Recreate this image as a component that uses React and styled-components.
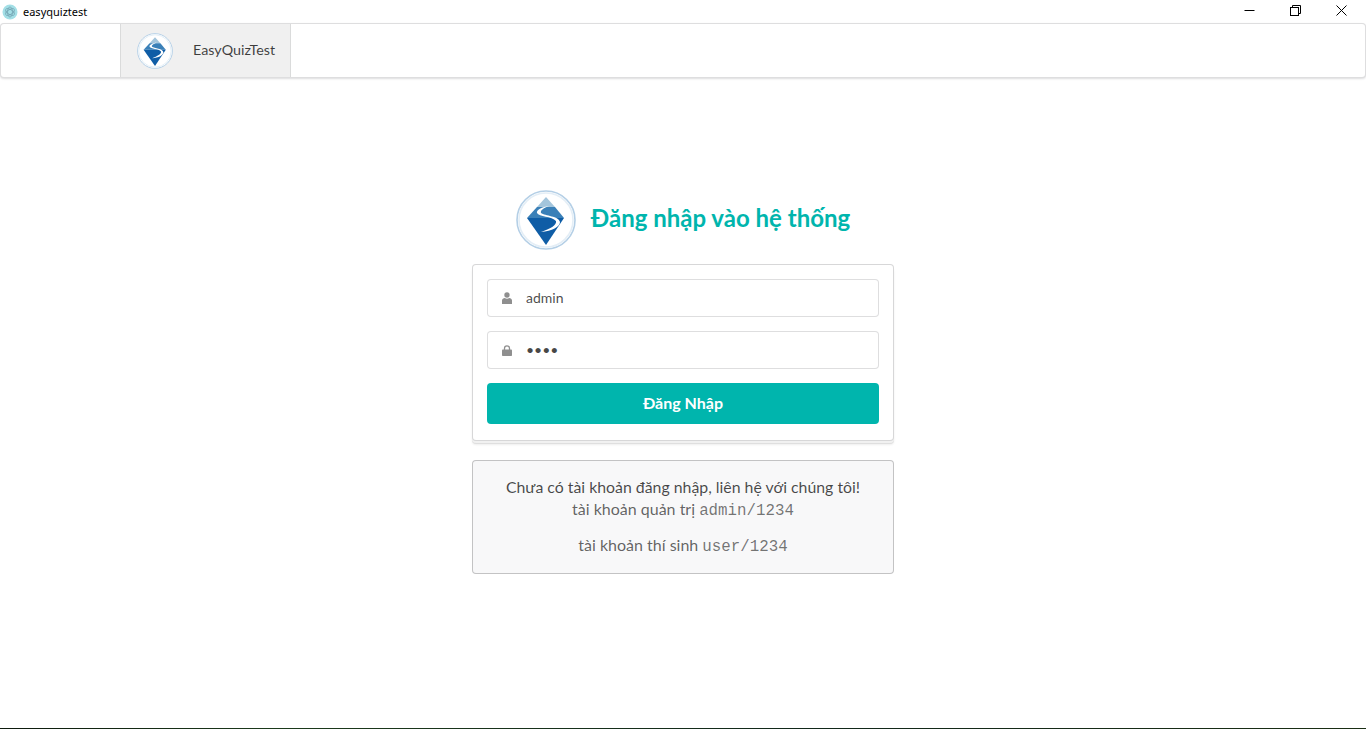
import styled, { createGlobalStyle } from "styled-components";

const GlobalStyle = createGlobalStyle`
  html, body {
    margin: 0;
    padding: 0;
    height: 100%;
    background: #ffffff;
    font-family: "Lato", "Liberation Sans", sans-serif;
    font-size: 14px;
    color: rgba(0, 0, 0, 0.87);
  }
  * {
    box-sizing: border-box;
  }
`;

function DiamondLogo({ size }) {
  return (
    <svg width={size} height={size} viewBox="0 0 60 60">
      <circle cx="30" cy="30" r="29" fill="#ffffff" stroke="#b4cfe6" strokeWidth="1.6" />
      <circle cx="30" cy="30" r="27" fill="none" stroke="#e4eef6" strokeWidth="1.6" />
      <path d="M30 7 L39 17 L21 17 Z" fill="#a3c5dc" />
      <path d="M21 17 L39 17 L48 28 L11 28 Z" fill="#3a80b8" />
      <path d="M11 28 L48 28 L30 55 Z" fill="#0f5da6" />
      <path
        d="M33 16 C26 17 20 20 21 23 C23 27 36 26 40 31 C41 35 34 39 25 42 C36 41 44 37 44 32 C43 26 29 26 25 23 C24 20 28 18 33 16 Z"
        fill="#ffffff"
      />
    </svg>
  );
}

function AppIcon() {
  return (
    <svg width="16" height="16" viewBox="0 0 16 16">
      <circle cx="8" cy="8" r="7.5" fill="#a3dfe6" />
      <g fill="none" stroke="#6f9fae" strokeWidth="0.7">
        <ellipse cx="8" cy="8" rx="5" ry="2.4" transform="rotate(30 8 8)" />
        <ellipse cx="8" cy="8" rx="5" ry="2.4" transform="rotate(90 8 8)" />
        <ellipse cx="8" cy="8" rx="5" ry="2.4" transform="rotate(150 8 8)" />
      </g>
    </svg>
  );
}

function UserIcon() {
  return (
    <svg width="10" height="12" viewBox="0 0 10 12" fill="#8f8f8f">
      <circle cx="5" cy="3" r="2.7" />
      <path d="M0 12 V8.6 C0 7 1.4 6.2 2.8 6 C4 7 6 7 7.2 6 C8.6 6.2 10 7 10 8.6 V12 Z" />
    </svg>
  );
}

function LockIcon() {
  return (
    <svg width="10" height="11" viewBox="0 0 10 11" fill="none">
      <path d="M2.5 5 V3.2 C2.5 1.7 3.6 0.8 5 0.8 C6.4 0.8 7.5 1.7 7.5 3.2 V5" stroke="#8f8f8f" strokeWidth="1.3" />
      <rect x="0" y="4.6" width="10" height="6.4" rx="0.8" fill="#8f8f8f" />
    </svg>
  );
}

function WindowButtons() {
  return (
    <WindowControls>
      <WindowButton>
        <svg width="11" height="11" viewBox="0 0 11 11">
          <path d="M0.5 5.5 H10.5" stroke="#000" strokeWidth="1" />
        </svg>
      </WindowButton>
      <WindowButton>
        <svg width="11" height="11" viewBox="0 0 11 11" fill="none" stroke="#000" strokeWidth="1">
          <rect x="0.5" y="2.5" width="8" height="8" />
          <path d="M2.5 2.5 V0.5 H10.5 V8.5 H8.5" />
        </svg>
      </WindowButton>
      <WindowButton>
        <svg width="11" height="11" viewBox="0 0 11 11">
          <path d="M0.5 0.5 L10.5 10.5 M10.5 0.5 L0.5 10.5" stroke="#000" strokeWidth="1" />
        </svg>
      </WindowButton>
    </WindowControls>
  );
}

export default function App() {
  return (
    <>
      <GlobalStyle />
      <Page>
        <TitleBar>
          <TitleLeft>
            <AppIcon />
            <WindowTitle>easyquiztest</WindowTitle>
          </TitleLeft>
          <WindowButtons />
        </TitleBar>

        <TopMenu>
          <MenuSpacer />
          <MenuBrand>
            <DiamondLogo size={36} />
            <span>EasyQuizTest</span>
          </MenuBrand>
        </TopMenu>

        <Content>
          <LoginColumn>
            <Header>
              <DiamondLogo size={60} />
              <Titulo>Đăng nhập vào hệ thống</Titulo>
            </Header>

            <StackedSegment>
              <Field>
                <FieldIcon>
                  <UserIcon />
                </FieldIcon>
                <Input type="text" defaultValue="admin" />
              </Field>
              <Field>
                <FieldIcon>
                  <LockIcon />
                </FieldIcon>
                <Input type="password" defaultValue="1234" />
              </Field>
              <Button type="button">Đăng Nhập</Button>
            </StackedSegment>

            <Message>
              <MessageHeader>Chưa có tài khoản đăng nhập, liên hệ với chúng tôi!</MessageHeader>
              <MessageLine>
                tài khoản quản trị <Code>admin/1234</Code>
              </MessageLine>
              <MessageLine $spaced>
                tài khoản thí sinh <Code>user/1234</Code>
              </MessageLine>
            </Message>
          </LoginColumn>
        </Content>
        <BottomEdge />
      </Page>
    </>
  );
}

const Page = styled.div`
  display: flex;
  flex-direction: column;
  height: 729px;
  overflow: hidden;
`;

const TitleBar = styled.div`
  display: flex;
  justify-content: space-between;
  align-items: center;
  height: 23px;
  flex-shrink: 0;
  background: #ffffff;
`;

const TitleLeft = styled.div`
  display: flex;
  align-items: center;
  gap: 5px;
  padding-left: 2px;
`;

const WindowTitle = styled.span`
  font-family: "Noto Sans", "Open Sans", sans-serif;
  font-size: 11px;
  color: #000000;
`;

const WindowControls = styled.div`
  display: flex;
  align-self: flex-start;
  padding-right: 2px;
`;

const WindowButton = styled.div`
  display: flex;
  justify-content: center;
  align-items: center;
  width: 46px;
  height: 20px;
`;

const TopMenu = styled.div`
  display: flex;
  flex-shrink: 0;
  height: 55px;
  background: #ffffff;
  border: 1px solid rgba(34, 36, 38, 0.15);
  border-radius: 4px;
  box-shadow: 0 1px 2px 0 rgba(34, 36, 38, 0.15);
`;

const MenuSpacer = styled.div`
  width: 119px;
`;

const MenuBrand = styled.div`
  display: flex;
  align-items: center;
  gap: 20px;
  width: 171px;
  padding-left: 16px;
  background: #f0f0f0;
  border-left: 1px solid rgba(34, 36, 38, 0.1);
  border-right: 1px solid rgba(34, 36, 38, 0.1);
  font-size: 14.3px;
  color: rgba(0, 0, 0, 0.75);

  span {
    padding-bottom: 2px;
  }
`;

const Content = styled.div`
  display: flex;
  flex: 1;
  justify-content: center;
  padding-top: 112px;
`;

const LoginColumn = styled.div`
  display: flex;
  flex-direction: column;
  width: 422px;
`;

const Header = styled.div`
  display: flex;
  align-items: center;
  justify-content: center;
  gap: 15px;
  height: 60px;
  margin-bottom: 14px;
`;

const Titulo = styled.h2`
  margin: 0;
  padding-bottom: 4px;
  font-size: 24px;
  font-weight: 700;
  line-height: 1.2;
  color: #00b5ad;
`;

const StackedSegment = styled.div`
  display: flex;
  flex-direction: column;
  gap: 14px;
  height: 177px;
  padding: 14px;
  background: #ffffff;
  border: 1px solid rgba(34, 36, 38, 0.18);
  border-radius: 4px;
  box-shadow: 0 2px 0 0 #f1f1f1, 0 3px 0 0 #dfdfdf, 0 4px 2px 0 rgba(34, 36, 38, 0.08);
`;

const Field = styled.div`
  display: flex;
  align-items: center;
  height: 38px;
  background: #ffffff;
  border: 1px solid rgba(34, 36, 38, 0.15);
  border-radius: 4px;
`;

const FieldIcon = styled.div`
  display: flex;
  justify-content: center;
  align-items: center;
  width: 38px;
  flex-shrink: 0;
`;

const Input = styled.input`
  flex: 1;
  min-width: 0;
  height: 100%;
  padding: 0 0 2px;
  border: none;
  outline: none;
  background: transparent;
  font-family: "Lato", sans-serif;
  font-size: 14px;
  color: rgba(0, 0, 0, 0.72);
`;

const Button = styled.button`
  height: 41px;
  padding: 0 0 2px;
  border: none;
  border-radius: 4px;
  background: #00b5ad;
  color: #ffffff;
  font-family: "Lato", sans-serif;
  font-size: 16px;
  font-weight: 700;
  cursor: pointer;
`;

const Message = styled.div`
  height: 114px;
  margin-top: 19px;
  padding: 14px 21px;
  background: #f8f8f9;
  border: 1px solid rgba(34, 36, 38, 0.25);
  border-radius: 4px;
  text-align: center;
`;

const MessageHeader = styled.div`
  font-size: 15.85px;
  line-height: 23px;
  color: rgba(0, 0, 0, 0.72);
`;

const MessageLine = styled.p`
  margin: ${(props) => (props.$spaced ? "14px" : "0")} 0 0;
  font-size: 16px;
  line-height: 22px;
  color: rgba(0, 0, 0, 0.62);
`;

const Code = styled.code`
  font-family: "Liberation Mono", monospace;
  font-size: 15.8px;
  line-height: 1;
  color: rgba(0, 0, 0, 0.55);
`;

const BottomEdge = styled.div`
  height: 1px;
  flex-shrink: 0;
  background: linear-gradient(90deg, #0d1a0d, #1c3a1c 20%, #12281a 60%, #1a2e14);
`;
